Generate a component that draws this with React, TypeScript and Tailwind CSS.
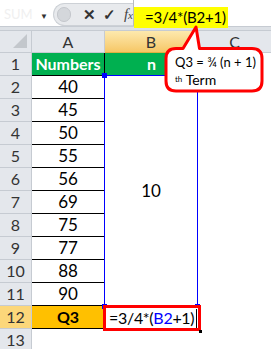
import React from 'react';

const nums = ['40', '45', '50', '55', '56', '69', '75', '77', '88', '90'];

const font = { fontFamily: 'Lato, "Open Sans", sans-serif' };

const RowHead: React.FC<{ n: number; active?: boolean }> = ({ n, active }) => (
  <div
    className={`h-full flex items-center justify-center border-b border-r border-[#c6cbd2] text-[16px] text-[#333] ${
      active ? 'bg-[#fcd77a]' : 'bg-[#e4e7ec]'
    }`}
  >
    {n}
  </div>
);

export default function App() {
  return (
    <div className="relative w-[271px] h-[349px] overflow-hidden bg-white" style={font}>
      {/* Formula bar */}
      <div className="flex h-[27px] border-b border-[#c6cbd2] bg-white">
        <div className="relative w-[53px] pt-[4px]">
          <div className="h-[22px] flex items-center pl-1 text-[13px] text-[#f0f0f0]">SUM</div>
          <span className="absolute left-[40px] top-[10px] text-[8px] text-[#333]">▼</span>
        </div>
        <div className="flex items-center w-[80px] mt-[3px] rounded-l-full bg-[#e8eaed] border border-r-0 border-[#cdd1d6]">
          <div className="ml-[3px] w-[15px] h-[15px] rounded-full bg-[#d4d7db] border border-[#c4c7cc]" />
          <span className="ml-[12px] text-[15px] text-[#333] font-bold">✕</span>
          <span className="ml-[7px] text-[15px] text-[#333] font-bold">✓</span>
          <span
            className="ml-[8px] text-[15px] italic text-[#444]"
            style={{ fontFamily: '"Liberation Serif", serif' }}
          >
            f<span className="text-[11px]">x</span>
          </span>
        </div>
        <div className="w-px bg-[#b8bcc2]" />
        <div className="flex-1 pt-[5px]">
          <div className="inline-block h-[21px] bg-[#ffff00] pl-[11px] pr-[2px] text-[15px] tracking-[-0.2px] leading-[21px] text-black whitespace-nowrap">
            =3/4*(B2+1)
          </div>
        </div>
      </div>
      <div className="h-[4px] bg-[#dde1e6] border-b border-[#c6cbd2]" />

      {/* Sheet grid */}
      <div className="grid grid-cols-[32px_73px_93px_73px] grid-rows-[22px_repeat(13,23px)]">
        {/* header row */}
        <div className="relative bg-[#e4e7ec] border-b border-r border-[#c6cbd2]">
          <div className="absolute right-[4px] bottom-[4px] w-0 h-0 border-l-[14px] border-l-transparent border-b-[14px] border-b-[#c3c7cc]" />
        </div>
        <div className="flex items-center justify-center bg-[#e4e7ec] border-b border-r border-[#c6cbd2] text-[16px] text-[#333]">A</div>
        <div className="flex items-center justify-center bg-gradient-to-b from-[#fde9ad] to-[#f6c765] border-b border-r border-[#e0b040] text-[16px] text-[#333]">B</div>
        <div className="flex items-center justify-center bg-[#e4e7ec] border-b border-[#c6cbd2] text-[16px] text-[#333]">C</div>

        {/* row 1 */}
        <RowHead n={1} />
        <div className="flex items-center justify-center bg-[#00b050] border-r border-b border-black text-white font-bold text-[16px]">Numbers</div>
        <div className="flex items-center justify-center bg-[#00b050] border-b border-[#0000ff] text-white font-bold text-[16px]">n</div>
        <div />

        {/* rows 2-11 */}
        {nums.map((v, i) => (
          <React.Fragment key={v}>
            <div className="col-start-1" style={{ gridRow: i + 3 }}>
              <RowHead n={i + 2} />
            </div>
            <div
              className="col-start-2 flex items-center justify-center border-r border-b border-black text-[17px] text-black"
              style={{ gridRow: i + 3 }}
            >
              {v}
            </div>
          </React.Fragment>
        ))}
        <div className="col-start-3 row-start-3 row-span-10 relative flex items-center justify-center border-l border-r border-[#0000ff] -ml-px text-[17px] text-black">
          10
          <div className="absolute -left-[3px] -top-[3px] w-[5px] h-[5px] bg-[#0000ff]" />
          <div className="absolute -left-[3px] -bottom-[3px] w-[5px] h-[5px] bg-[#0000ff]" />
          <div className="absolute -right-[3px] -bottom-[3px] w-[5px] h-[5px] bg-[#0000ff]" />
        </div>

        {/* row 12 */}
        <div className="col-start-1 row-start-13">
          <RowHead n={12} active />
        </div>
        <div className="col-start-2 row-start-13 flex items-center justify-center bg-[#ffc000] border-r border-b border-black text-[16px] font-bold text-black">Q3</div>
        <div className="col-start-3 row-start-13 relative">
          <div className="absolute -left-[2px] -top-[1px] -right-[3px] -bottom-[2px] border-[3px] border-[#ff0000] bg-white flex items-center pl-[3px] text-[16px] tracking-[-0.3px] text-black whitespace-nowrap">
            =3/4*(<span className="text-[#0000ff]">B2</span>+1)
            <span className="ml-[2px] w-px h-[19px] bg-black" />
          </div>
          <div className="absolute -right-[4px] -bottom-[4px] w-[3px] h-[3px] bg-black" />
        </div>

        {/* row 13 */}
        <div className="col-start-1 row-start-14">
          <RowHead n={13} />
        </div>
      </div>

      {/* Callout */}
      <svg className="absolute left-0 top-0" width="271" height="349" viewBox="0 0 271 349">
        <path
          d="M176 48.5 H183 L196 27 L199.5 48.5 H252 Q262 48.5 262 58.5 V81 Q262 91 252 91 H176 Q166 91 166 81 V58.5 Q166 48.5 176 48.5 Z"
          fill="white"
          stroke="#ff0000"
          strokeWidth="3"
          strokeLinejoin="round"
        />
      </svg>
      <div className="absolute left-[175px] top-[54px] text-[13px] leading-[17px] text-black whitespace-nowrap">
        <div>Q3 = ¾ (n + 1)</div>
        <div>
          <span className="text-[8px] align-top">th</span> <span className="text-[14px]">Term</span>
        </div>
      </div>
    </div>
  );
}
